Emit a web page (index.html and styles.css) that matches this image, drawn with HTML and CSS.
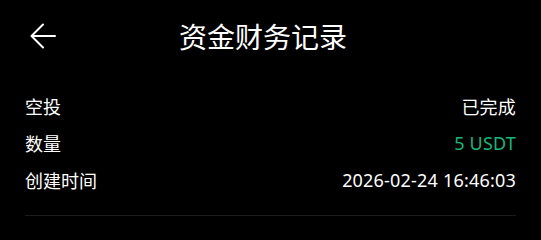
FILE: index.html
```html
<!DOCTYPE html>
<html lang="zh-CN">
<head>
    <meta charset="UTF-8">
    <meta name="viewport" content="width=device-width, initial-scale=1.0">
    <title>资金财务记录</title>
    <link rel="stylesheet" href="styles.css">
</head>
<body>
    <div class="header">
        <button class="back-button">
            <svg width="26" height="26" viewBox="0 0 26 26" fill="none" stroke="#ffffff" stroke-width="2" stroke-linecap="round" stroke-linejoin="round">
                <path d="M25 13H2"/>
                <path d="M13 1.5L1.5 13L13 24.5"/>
            </svg>
        </button>
        <h1>资金财务记录</h1>
    </div>

    <div class="record">
        <div class="row">
            <span class="label">空投</span>
            <span class="value">已完成</span>
        </div>
        <div class="row">
            <span class="label">数量</span>
            <span class="value green">5 USDT</span>
        </div>
        <div class="row">
            <span class="label">创建时间</span>
            <span class="value">2026-02-24 16:46:03</span>
        </div>
    </div>
</body>
</html>
```

FILE: styles.css
```css
* {
    margin: 0;
    padding: 0;
    box-sizing: border-box;
    font-family: 'Noto Sans', 'Noto Sans CJK SC', sans-serif;
}

body {
    background-color: #000000;
    color: #ffffff;
    width: 541px;
    height: 240px;
    overflow: hidden;
}

.header {
    height: 71px;
    padding: 0 25px 0 30px;
    display: flex;
    align-items: center;
}

.back-button {
    background: none;
    border: none;
    width: 26px;
    height: 26px;
    display: flex;
    cursor: pointer;
}

.header h1 {
    flex: 1;
    text-align: center;
    font-size: 28px;
    font-weight: 400;
    padding-right: 46px;
}

.record {
    margin: 0 25px;
    padding: 16px 0 17px;
    border-bottom: 1px solid #1c1c1c;
}

.row {
    height: 37px;
    display: flex;
    justify-content: space-between;
    align-items: center;
    font-size: 18px;
}

.value {
    letter-spacing: 0.2px;
}

.green {
    color: #13b87a;
}
```
